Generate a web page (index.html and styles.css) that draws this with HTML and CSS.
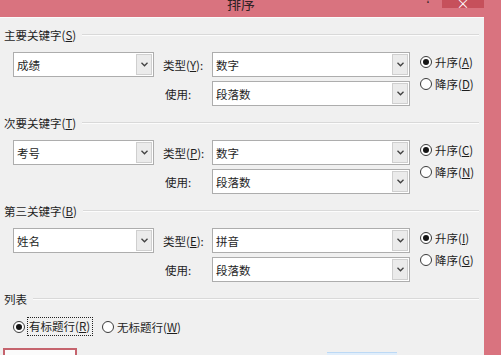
FILE: index.html
```html
<!DOCTYPE html>
<html lang="zh-CN">
<head>
    <meta charset="UTF-8">
    <title>排序</title>
    <link rel="stylesheet" href="styles.css">
</head>
<body>
    <div class="titlebar">
        <span class="title">排序</span>
        <span class="help">?</span>
        <span class="close">×</span>
    </div>

    <div class="content">
        <section class="group">
            <div class="group-head"><span>主要关键字(<u>S</u>)</span><i class="rule"></i></div>
            <div class="group-body">
                <div class="combo"><span>成绩</span><b class="arrow"><svg width="7" height="5" viewBox="0 0 7 5"><path d="M0.5 0.8 L3.5 3.8 L6.5 0.8" /></svg></b></div>
                <label class="lbl">类型(<u>Y</u>):</label>
                <div class="combo"><span>数字</span><b class="arrow"><svg width="7" height="5" viewBox="0 0 7 5"><path d="M0.5 0.8 L3.5 3.8 L6.5 0.8" /></svg></b></div>
                <div class="radios">
                    <div class="radio"><i class="dot on"></i><span>升序(<u>A</u>)</span></div>
                    <div class="radio"><i class="dot"></i><span>降序(<u>D</u>)</span></div>
                </div>
                <label class="lbl lbl-use">使用:</label>
                <div class="combo"><span>段落数</span><b class="arrow"><svg width="7" height="5" viewBox="0 0 7 5"><path d="M0.5 0.8 L3.5 3.8 L6.5 0.8" /></svg></b></div>
            </div>
        </section>

        <section class="group">
            <div class="group-head"><span>次要关键字(<u>T</u>)</span><i class="rule"></i></div>
            <div class="group-body">
                <div class="combo"><span>考号</span><b class="arrow"><svg width="7" height="5" viewBox="0 0 7 5"><path d="M0.5 0.8 L3.5 3.8 L6.5 0.8" /></svg></b></div>
                <label class="lbl">类型(<u>P</u>):</label>
                <div class="combo"><span>数字</span><b class="arrow"><svg width="7" height="5" viewBox="0 0 7 5"><path d="M0.5 0.8 L3.5 3.8 L6.5 0.8" /></svg></b></div>
                <div class="radios">
                    <div class="radio"><i class="dot on"></i><span>升序(<u>C</u>)</span></div>
                    <div class="radio"><i class="dot"></i><span>降序(<u>N</u>)</span></div>
                </div>
                <label class="lbl lbl-use">使用:</label>
                <div class="combo"><span>段落数</span><b class="arrow"><svg width="7" height="5" viewBox="0 0 7 5"><path d="M0.5 0.8 L3.5 3.8 L6.5 0.8" /></svg></b></div>
            </div>
        </section>

        <section class="group">
            <div class="group-head"><span>第三关键字(<u>B</u>)</span><i class="rule"></i></div>
            <div class="group-body">
                <div class="combo"><span>姓名</span><b class="arrow"><svg width="7" height="5" viewBox="0 0 7 5"><path d="M0.5 0.8 L3.5 3.8 L6.5 0.8" /></svg></b></div>
                <label class="lbl">类型(<u>E</u>):</label>
                <div class="combo"><span>拼音</span><b class="arrow"><svg width="7" height="5" viewBox="0 0 7 5"><path d="M0.5 0.8 L3.5 3.8 L6.5 0.8" /></svg></b></div>
                <div class="radios">
                    <div class="radio"><i class="dot on"></i><span>升序(<u>I</u>)</span></div>
                    <div class="radio"><i class="dot"></i><span>降序(<u>G</u>)</span></div>
                </div>
                <label class="lbl lbl-use">使用:</label>
                <div class="combo"><span>段落数</span><b class="arrow"><svg width="7" height="5" viewBox="0 0 7 5"><path d="M0.5 0.8 L3.5 3.8 L6.5 0.8" /></svg></b></div>
            </div>
        </section>

        <section class="list">
            <div class="group-head"><span>列表</span><i class="rule"></i></div>
            <div class="list-row">
                <i class="dot on"></i><span class="focus">有标题行(<u>R</u>)</span>
                <i class="dot second"></i><span class="plain">无标题行(<u>W</u>)</span>
            </div>
        </section>

        <div class="buttons">
            <div class="btn-add"></div>
            <div class="btn-ok"></div>
        </div>
    </div>
</body>
</html>
```

FILE: styles.css
```css
body {
    margin: 0;
    width: 501px;
    height: 355px;
    overflow: hidden;
    background-color: #d9737f;
    font-family: "Noto Sans CJK SC", "Microsoft YaHei", sans-serif;
    font-size: 11.5px;
    color: #1e1e1e;
}

u {
    text-decoration-thickness: 1px;
    text-underline-offset: 1px;
}

.titlebar {
    height: 17px;
    display: flex;
    align-items: flex-start;
    overflow: hidden;
    color: #2e2224;
}

.title {
    margin-left: 227px;
    margin-top: -5px;
    font-size: 14px;
    line-height: 17px;
}

.help {
    margin-left: auto;
    margin-right: 11px;
    margin-top: -11px;
    font-size: 12px;
    line-height: 17px;
}

.close {
    width: 42px;
    height: 8px;
    margin-right: 17px;
    background-color: #c6505b;
    color: #fff;
    font-size: 13px;
    line-height: 6px;
    text-align: center;
    overflow: hidden;
}

.content {
    width: 484px;
    height: 338px;
    box-sizing: border-box;
    padding-top: 8px;
    border-top: 1px solid #fbfbfb;
    background-color: #f0f0f0;
    overflow: hidden;
}

.group-head {
    display: flex;
    align-items: center;
    height: 18px;
    padding-left: 4px;
}

.rule {
    flex: 1;
    margin: 0 5px 0 6px;
    border-top: 1px solid #d9d9d9;
    border-bottom: 1px solid #fcfcfc;
}

.group-body {
    display: grid;
    grid-template-columns: 141px 58px 198px auto;
    grid-template-rows: 25px 25px;
    row-gap: 4px;
    padding-left: 13px;
    margin: 8px 0;
}

.combo {
    display: flex;
    align-items: center;
    box-sizing: border-box;
    border: 1px solid #adadad;
    background-color: #fff;
}

.combo span {
    flex: 1;
    padding-left: 3px;
}

.arrow {
    width: 14px;
    align-self: stretch;
    display: flex;
    align-items: center;
    justify-content: center;
    margin: 1px;
    border: 1px solid #cfcfcf;
    background-color: #ebebeb;
}

.arrow path {
    fill: none;
    stroke: #404040;
    stroke-width: 1.3;
}

.group-body > .combo:first-child {
    grid-row: 1;
}

.lbl {
    display: flex;
    align-items: center;
    padding-left: 9px;
}

.lbl-use {
    grid-column: 2;
    padding-left: 11px;
}

.radios {
    grid-column: 4;
    grid-row: 1 / span 2;
    display: flex;
    flex-direction: column;
    padding-left: 10px;
    margin-top: -1px;
}

.radio {
    display: flex;
    align-items: center;
    gap: 3px;
    height: 22px;
}

.dot {
    width: 12px;
    height: 12px;
    box-sizing: border-box;
    border: 1px solid #3a3a3a;
    border-radius: 50%;
    background-color: #fff;
    display: flex;
    align-items: center;
    justify-content: center;
}

.dot.on::after {
    content: "";
    width: 6px;
    height: 6px;
    border-radius: 50%;
    background-color: #151515;
}

.list-row {
    display: flex;
    align-items: center;
    height: 19px;
    margin-top: 9px;
    padding-left: 13px;
}

.focus {
    margin-left: 2px;
    padding: 0 2px 0 1px;
    line-height: 17px;
    border: 1px dotted #222;
}

.dot.second {
    margin-left: 9px;
}

.plain {
    margin-left: 3px;
}

.buttons {
    display: flex;
    margin-top: 12px;
}

.btn-add {
    width: 74px;
    height: 22px;
    margin-left: 3px;
    box-sizing: border-box;
    border: 2px solid #c5636d;
    background-color: #fbfbfb;
}

.btn-ok {
    width: 70px;
    height: 20px;
    margin-top: 4px;
    margin-left: auto;
    margin-right: 87px;
    border-top: 1px solid #bcd9f5;
    background-color: #e1eefb;
}
```
